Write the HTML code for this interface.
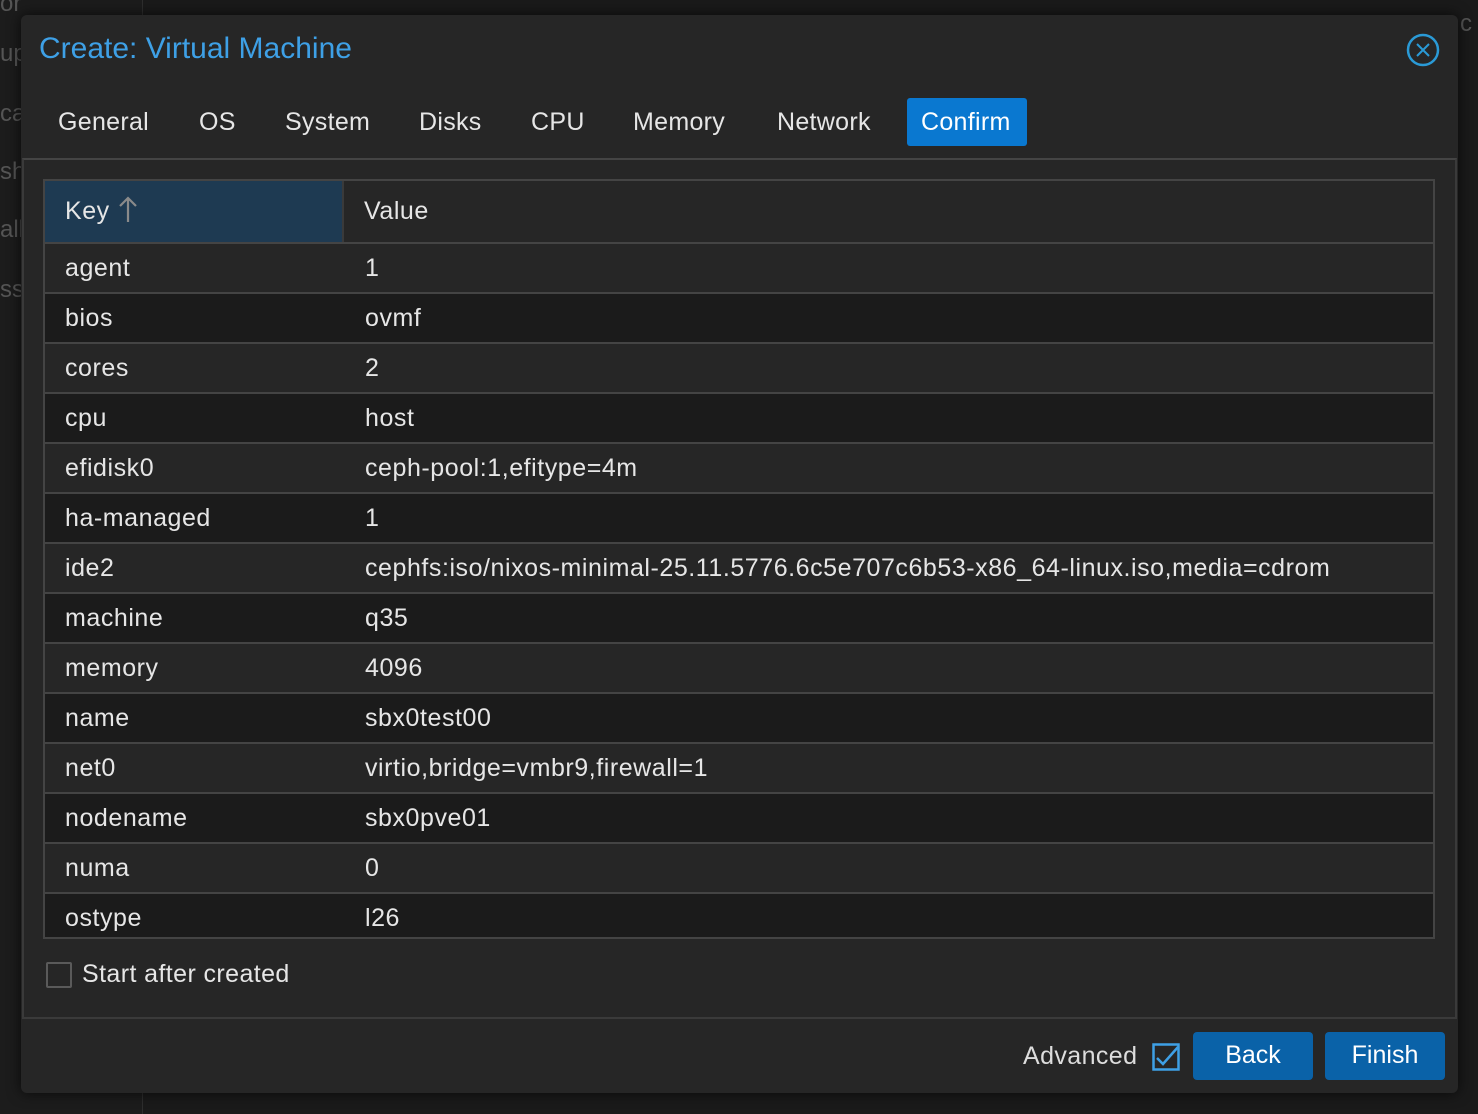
<!DOCTYPE html>
<html><head><meta charset="utf-8"><style>
*{box-sizing:border-box;margin:0;padding:0}
body{width:1478px;height:1114px;background:#1a1a1a;font-family:"Liberation Sans",Helvetica,sans-serif;color:#e6e6e6;position:relative;overflow:hidden}
.side{position:absolute;left:0;top:0;width:143px;height:1114px;background:#1c1c1c;border-right:1px solid #2e2e2e}
.bgtxt{position:absolute;color:#555;font-size:24px}
.win{position:absolute;left:21px;top:15px;width:1437px;height:1078px;background:#262626;border-radius:6px;box-shadow:0 0 14px rgba(0,0,0,.7)}
.title{position:absolute;left:18px;top:17px;font-size:30px;color:#3ea0e6}
.close{position:absolute;left:1385px;top:18px}
.tab{position:absolute;top:83px;height:48px;line-height:48px;font-size:25px;color:#e6e6e6;padding:0 14px;letter-spacing:0.3px}
.tab.on{background:#0a78d0;border-radius:3px;color:#fff}
.body{position:absolute;left:1px;top:143px;width:1435px;height:861px;border-top:2px solid #444;border-left:2px solid #3a3a3a;border-right:2px solid #3a3a3a;border-bottom:2px solid #3a3a3a}
.tbl{position:absolute;left:19px;top:19px;width:1392px;height:760px;border:2px solid #444;overflow:hidden;background:#1b1b1b;letter-spacing:0.55px}
.hd{height:63px;display:flex;border-bottom:2px solid #444;background:#262626}
.hk{width:299px;background:#1e3a52;padding-left:20px;line-height:60px;font-size:25px;border-right:2px solid #3a3a3a}
.hv{padding-left:20px;line-height:60px;font-size:25px}
.r{height:50px;display:flex;border-bottom:2px solid #444;font-size:25px;line-height:49px}
.r:nth-child(odd){background:#262626}
.r:nth-child(even){background:#1b1b1b}
.k{width:300px;padding-left:20px}
.v{padding-left:20px;white-space:nowrap}
.chk{position:absolute;left:22px;top:802px;width:26px;height:26px;border:2px solid #5a5a5a;border-radius:2px}
.chkl{position:absolute;left:58px;top:800px;font-size:25px;letter-spacing:0.4px}
.btn{position:absolute;top:1017px;width:120px;height:48px;background:#0a62a8;border-radius:4px;color:#fff;font-size:25px;text-align:center;line-height:46px}
</style></head><body>
<div class="side"></div>
<div class="bgtxt" style="left:0;top:-10px">or</div>
<div class="bgtxt" style="left:0;top:40px">up</div>
<div class="bgtxt" style="left:0;top:100px">ca</div>
<div class="bgtxt" style="left:0;top:158px">sh</div>
<div class="bgtxt" style="left:0;top:216px">all</div>
<div class="bgtxt" style="left:0;top:276px">ss</div>
<div class="bgtxt" style="left:1460px;top:10px">c</div>
<div class="win">
<div class="title">Create: Virtual Machine</div>
<svg class="close" width="34" height="34" viewBox="0 0 34 34"><circle cx="17" cy="17" r="15" fill="none" stroke="#2a9ad6" stroke-width="2.5"/><path d="M11 11L23 23M23 11L11 23" stroke="#2a9ad6" stroke-width="2"/></svg>
<div class="tab" style="left:23px">General</div>
<div class="tab" style="left:164px">OS</div>
<div class="tab" style="left:250px">System</div>
<div class="tab" style="left:384px">Disks</div>
<div class="tab" style="left:496px">CPU</div>
<div class="tab" style="left:598px">Memory</div>
<div class="tab" style="left:742px">Network</div>
<div class="tab on" style="left:886px;width:120px">Confirm</div>
<div class="body">
<div class="tbl">
<div class="hd"><div class="hk">Key <svg width="22" height="28" viewBox="0 0 22 28" style="vertical-align:-4px"><path d="M11 27V3M3 11L11 3L19 11" fill="none" stroke="#8a8a8a" stroke-width="2.2"/></svg></div><div class="hv">Value</div></div>
<div>
<div class="r"><div class="k">agent</div><div class="v">1</div></div>
<div class="r"><div class="k">bios</div><div class="v">ovmf</div></div>
<div class="r"><div class="k">cores</div><div class="v">2</div></div>
<div class="r"><div class="k">cpu</div><div class="v">host</div></div>
<div class="r"><div class="k">efidisk0</div><div class="v">ceph-pool:1,efitype=4m</div></div>
<div class="r"><div class="k">ha-managed</div><div class="v">1</div></div>
<div class="r"><div class="k">ide2</div><div class="v">cephfs:iso/nixos-minimal-25.11.5776.6c5e707c6b53-x86_64-linux.iso,media=cdrom</div></div>
<div class="r"><div class="k">machine</div><div class="v">q35</div></div>
<div class="r"><div class="k">memory</div><div class="v">4096</div></div>
<div class="r"><div class="k">name</div><div class="v">sbx0test00</div></div>
<div class="r"><div class="k">net0</div><div class="v">virtio,bridge=vmbr9,firewall=1</div></div>
<div class="r"><div class="k">nodename</div><div class="v">sbx0pve01</div></div>
<div class="r"><div class="k">numa</div><div class="v">0</div></div>
<div class="r"><div class="k">ostype</div><div class="v">l26</div></div>
</div>
</div>
<div class="chk"></div>
<div class="chkl">Start after created</div>
</div>
<div style="position:absolute;left:1002px;top:1027px;font-size:25px;color:#ddd;letter-spacing:0.4px">Advanced</div>
<svg style="position:absolute;left:1131px;top:1028px" width="28" height="28" viewBox="0 0 28 28"><rect x="1.5" y="1.5" width="25" height="25" fill="none" stroke="#3ea0e6" stroke-width="2.5"/><path d="M5 15L11 21L26 4" fill="none" stroke="#3ea0e6" stroke-width="2.5"/></svg>
<div class="btn" style="left:1172px">Back</div>
<div class="btn" style="left:1304px">Finish</div>
</div>
</body></html>
